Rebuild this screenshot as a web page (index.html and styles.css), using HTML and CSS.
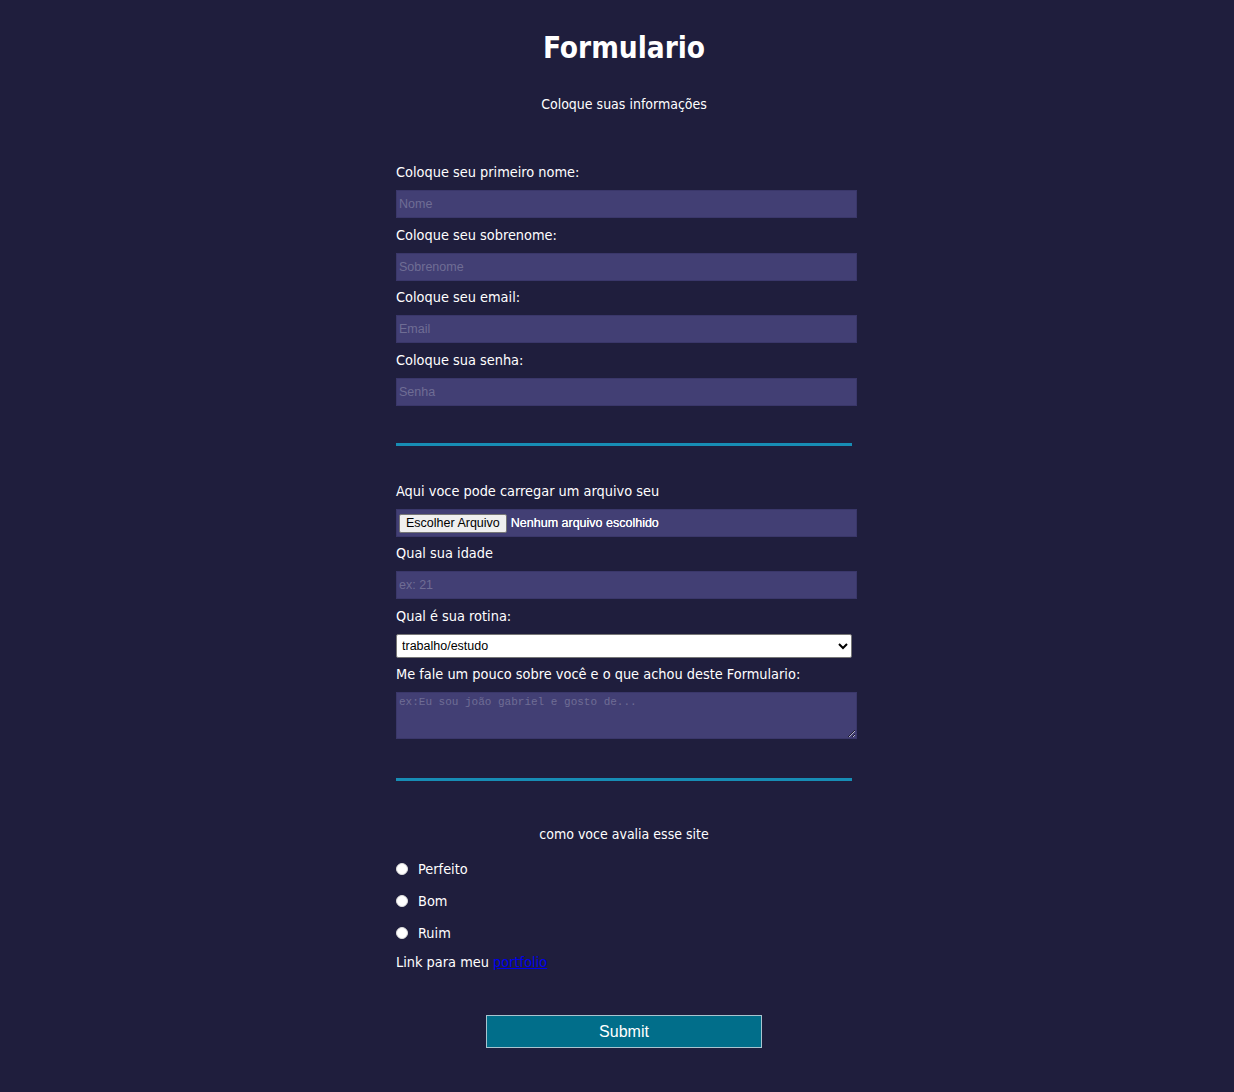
FILE: index.html
```html
<!DOCTYPE html>
<html lang="pt-BR">
<head>
<meta charset="utf-8">
<title>Formulario</title>
<link rel="stylesheet" href="styles.css">
</head>
<body>
<main class="container">
  <h1 class="title">Formulario</h1>
  <p class="subtitle">Coloque suas informações</p>
  <form class="form">
    <label class="label" for="nome">Coloque seu primeiro nome:</label>
    <input class="field" id="nome" type="text" placeholder="Nome">
    <label class="label" for="sobrenome">Coloque seu sobrenome:</label>
    <input class="field" id="sobrenome" type="text" placeholder="Sobrenome">
    <label class="label" for="email">Coloque seu email:</label>
    <input class="field" id="email" type="text" placeholder="Email">
    <label class="label" for="senha">Coloque sua senha:</label>
    <input class="field" id="senha" type="text" placeholder="Senha">

    <hr class="divider divider-first">

    <span class="label">Aqui voce pode carregar um arquivo seu</span>
    <div class="file-field">
      <span class="file-btn">Escolher Arquivo</span>
      <span class="file-name">Nenhum arquivo escolhido</span>
    </div>
    <label class="label" for="idade">Qual sua idade</label>
    <input class="field" id="idade" type="text" placeholder="ex: 21">
    <label class="label" for="rotina">Qual é sua rotina:</label>
    <select class="select" id="rotina">
      <option>trabalho/estudo</option>
    </select>
    <label class="label" for="sobre">Me fale um pouco sobre você e o que achou deste Formulario:</label>
    <textarea class="textarea" id="sobre" placeholder="ex:Eu sou joão gabriel e gosto de..."></textarea>

    <hr class="divider divider-second">

    <p class="rate-title">como voce avalia esse site</p>
    <div class="radio-row"><span class="radio"></span><span class="radio-label">Perfeito</span></div>
    <div class="radio-row"><span class="radio"></span><span class="radio-label">Bom</span></div>
    <div class="radio-row"><span class="radio"></span><span class="radio-label">Ruim</span></div>
    <p class="link-line">Link para meu <a class="link" href="#">portfolio</a></p>

    <div class="submit-wrap">
      <button class="submit" type="button">Submit</button>
    </div>
  </form>
</main>
</body>
</html>
```
FILE: styles.css
```css
html, body {
  margin: 0;
  background: #1f1e3d;
}
body {
  padding: 0 0 0 14px;
  color: #ffffff;
  font-family: "DejaVu Sans Condensed", "DejaVu Sans", sans-serif;
  font-size: 14.4px;
  min-height: 1092px;
}
.container {
  width: 456px;
  margin: 0 auto;
  padding-top: 28px;
}
.title {
  margin: 0;
  text-align: center;
  font-size: 29.5px;
  line-height: 40px;
  font-weight: bold;
}
.subtitle {
  margin: 26px 0 0;
  text-align: center;
  line-height: 20px;
  font-size: 14px;
}
.form {
  display: flex;
  flex-direction: column;
  margin-top: 49px;
}
.label {
  display: block;
  line-height: 19px;
  margin-bottom: 8px;
}
.field {
  box-sizing: border-box;
  width: 461px;
  height: 28px;
  margin: 0 0 7.5px;
  padding: 1px 2px;
  border: 1px solid #3a376a;
  background: #423f74;
  color: #fff;
  font-family: "Liberation Sans", Arial, sans-serif;
  font-size: 12.5px;
  outline: none;
}
.field::placeholder {
  color: #6f6d94;
}
.divider {
  width: 456px;
  height: 3px;
  margin: 0;
  border: 0;
  background: #178db5;
}
.divider-first { margin-top: 29.5px; margin-bottom: 36.5px; }
.divider-second { margin-top: 39px; margin-bottom: 43.5px; }
.file-field {
  box-sizing: border-box;
  width: 461px;
  height: 28px;
  margin-bottom: 7px;
  padding: 0 2px;
  display: flex;
  align-items: center;
  gap: 4px;
  background: #423f74;
  border: 1px solid #3a376a;
  font-family: "Liberation Sans", Arial, sans-serif;
  font-size: 12.5px;
}
.file-btn {
  box-sizing: border-box;
  height: 19px;
  line-height: 17px;
  padding: 0 6px;
  background: #efefef;
  color: #000;
  border: 1px solid #767676;
  border-radius: 2px;
}
.file-name {
  color: #fff;
  font-size: 12.5px;
  text-shadow: 0 0 0.6px #fff;
}
.select {
  box-sizing: border-box;
  width: 456px;
  height: 24px;
  margin: 0 0 7px;
  padding: 0 1px;
  background: #fff;
  color: #000;
  border: 1px solid #767676;
  border-radius: 2px;
  font-family: "Liberation Sans", Arial, sans-serif;
  font-size: 12.5px;
}
.textarea {
  box-sizing: border-box;
  width: 461px;
  height: 47px;
  margin: 0;
  padding: 3px 2px;
  background: #423f74;
  border: 1px solid #3a376a;
  color: #fff;
  font-family: "Liberation Mono", monospace;
  font-size: 11px;
  resize: vertical;
  outline: none;
}
.textarea::placeholder {
  color: #6f6d94;
}
.rate-title {
  margin: 0 0 9px;
  text-align: center;
  line-height: 20px;
  font-size: 14px;
}
.radio-row {
  display: flex;
  align-items: center;
  height: 32px;
  gap: 10px;
}
.radio {
  box-sizing: border-box;
  width: 12px;
  height: 12px;
  border-radius: 50%;
  background: #fff;
  border: 1px solid #dcdcdc;
}
.link-line {
  margin: 3px 0 0;
  line-height: 20px;
}
.link {
  color: #0000ee;
  text-decoration: underline;
}
.submit-wrap {
  display: flex;
  justify-content: center;
  margin-top: 43px;
}
.submit {
  width: 276px;
  height: 33px;
  background: #016e8a;
  border: 1px solid #a9c4cf;
  color: #fff;
  font-family: "Liberation Sans", Arial, sans-serif;
  font-size: 16px;
  padding: 0;
}
```
